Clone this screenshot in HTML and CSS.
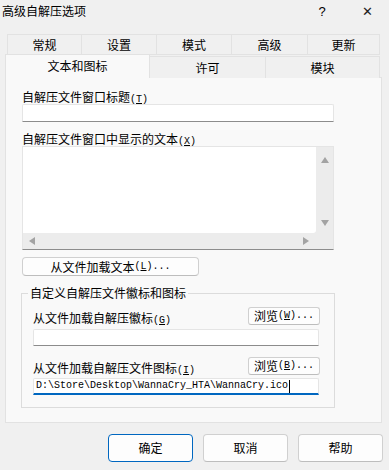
FILE: index.html
```html
<!DOCTYPE html>
<html lang="zh">
<head>
<meta charset="utf-8">
<link rel="stylesheet" href="styles.css">
</head>
<body>
<div class="window">
  <div class="titlebar">
    <span class="title">高级自解压选项</span>
    <span class="tb-btns"><span class="help">?</span><span class="close">✕</span></span>
  </div>
  <div class="tabs">
    <div class="tabrow row1">
      <div class="tab w74">常规</div>
      <div class="tab w75">设置</div>
      <div class="tab w75">模式</div>
      <div class="tab w76">高级</div>
      <div class="tab w72">更新</div>
    </div>
    <div class="tabrow row2">
      <div class="tab sel">文本和图标</div>
      <div class="tab w116">许可</div>
      <div class="tab w114">模块</div>
    </div>
  </div>
  <div class="panel">
    <div class="lbl">自解压文件窗口标题<span class="m">(<u>T</u>)</span></div>
    <div class="field f1"></div>
    <div class="lbl l2">自解压文件窗口中显示的文本<span class="m">(<u>X</u>)</span></div>
    <div class="textarea">
      <div class="ta-main">
        <div class="ta-white"></div>
        <div class="vscroll"><span class="arr up"></span><span class="arr down"></span></div>
      </div>
      <div class="hscroll"><span class="arr left"></span><span class="arr right"></span></div>
    </div>
    <div class="btn loadtxt">从文件加载文本<span class="m">(<u>L</u>)...</span></div>
    <fieldset class="group">
      <legend>自定义自解压文件徽标和图标</legend>
      <div class="grow g1">
        <span class="glbl">从文件加载自解压徽标<span class="m">(<u>G</u>)</span></span>
        <span class="btn small">浏览<span class="m">(<u>W</u>)...</span></span>
      </div>
      <div class="field f2"></div>
      <div class="grow g2">
        <span class="glbl">从文件加载自解压文件图标<span class="m">(<u>I</u>)</span></span>
        <span class="btn small">浏览<span class="m">(<u>B</u>)...</span></span>
      </div>
      <div class="field f3"><span class="val">D:\Store\Desktop\WannaCry_HTA\WannaCry.ico</span><span class="caret"></span></div>
    </fieldset>
  </div>
  <div class="footer">
    <div class="btn big ok">确定</div>
    <div class="btn big">取消</div>
    <div class="btn big">帮助</div>
  </div>
</div>
</body>
</html>
```

FILE: styles.css
```css
* { box-sizing: border-box; }
html, body { margin: 0; padding: 0; }
body {
  width: 389px;
  height: 470px;
  background: #f0f0f0;
  font-family: "Noto Sans CJK SC", "Noto Sans", sans-serif;
  font-size: 12px;
  color: #000;
  overflow: hidden;
}
.window { width: 389px; height: 470px; }
.titlebar {
  height: 22px;
  display: flex;
  justify-content: space-between;
  align-items: center;
  padding: 0 0 0 2px;
}
.title { font-size: 12px; line-height: 20px; }
.tb-btns { display: flex; align-items: center; }
.help { font-family: "Liberation Sans", sans-serif; font-size: 13px; width: 46px; text-align: center; margin-right: 0; }
.close { font-family: "DejaVu Sans", sans-serif; font-size: 13px; font-weight: 300; width: 44px; text-align: center; color: #222; }

.tabs { margin-top: 12px; position: relative; z-index: 1; }
.tabrow { display: flex; }
.row1 { margin-left: 7px; height: 21px; }
.row2 { margin-left: 5px; height: 24px; margin-top: -1px; align-items: flex-end; }
.tab {
  height: 21px;
  background: #f0f0f0;
  border: 1px solid #e2e2e2;
  margin-right: -1px;
  display: flex;
  align-items: center;
  justify-content: center;
  font-size: 12px;
  line-height: 14px;
}
.row2 .tab { height: 22px; border-bottom: none; }
.row2 .tab.sel {
  height: 24px;
  width: 145px;
  background: #f9f9f9;
  border-color: #e2e2e2;
  padding-bottom: 2px;
}
.w74 { width: 75px; }
.w75 { width: 76px; }
.w76 { width: 77px; }
.w72 { width: 73px; }
.w116 { width: 117px; }
.w114 { width: 115px; }

.panel {
  margin: -1px 0 0 5px;
  width: 377px;
  height: 346px;
  background: #f9f9f9;
  border: 1px solid #e2e2e2;
  padding: 12px 0 0 16px;
}
.lbl { line-height: 14px; height: 14px; font-size: 12px; }
.l2 { margin-top: 10px; }
.m { font-family: "Liberation Mono", monospace; font-size: 10px; }
u { text-decoration: underline; text-underline-offset: 1px; }

.field {
  background: #fff;
  border: 1px solid #e5e5e5;
  border-bottom: 1px solid #8c8c8c;
  border-radius: 2px 2px 0 0;
}
.f1 { width: 312px; height: 18px; }

.textarea {
  width: 312px;
  height: 104px;
  border: 1px solid #e5e5e5;
  border-bottom: 1px solid #8c8c8c;
  background: #ececec;
  display: flex;
  flex-direction: column;
}
.ta-main { display: flex; height: 86px; }
.ta-white { flex: 1; background: #fff; border-radius: 0 0 3px 0; }
.vscroll {
  width: 17px;
  display: flex;
  flex-direction: column;
  justify-content: space-between;
  align-items: center;
  padding: 10px 0 7px;
}
.hscroll {
  flex: 1;
  display: flex;
  justify-content: space-between;
  align-items: center;
  padding: 0 24px 0 6px;
}
.arr { width: 0; height: 0; border: 4px solid transparent; display: block; }
.up { border-bottom: 6px solid #a3a3a3; border-top: 0; }
.down { border-top: 6px solid #a3a3a3; border-bottom: 0; }
.left { border-right: 6px solid #a3a3a3; border-left: 0; }
.right { border-left: 6px solid #a3a3a3; border-right: 0; }

.btn {
  background: #fdfdfd;
  border: 1px solid #d0d0d0;
  border-bottom-color: #bdbdbd;
  border-radius: 4px;
  display: flex;
  align-items: center;
  justify-content: center;
  font-size: 12px;
  line-height: 14px;
}
.loadtxt { width: 177px; height: 19px; margin-top: 7px; }

.group {
  margin: 9px 0 0 -1px;
  width: 314px;
  height: 123px;
  border: 1px solid #dcdcdc;
  padding: 0 14px 0 11px;
  min-width: 0;
}
.group legend {
  font-size: 12px;
  line-height: 16px;
  padding: 0 2px;
  margin-left: -5px;
}
.grow { display: flex; justify-content: space-between; align-items: flex-end; height: 20px; }
.g1 { margin-top: 7px; }
.g2 { margin-top: 12px; }
.glbl { line-height: 14px; }
.btn.small { width: 72px; height: 18px; margin-bottom: 3px; border-radius: 3px; }
.f2 { width: 286px; height: 17px; margin-top: 1px; }
.f3 {
  width: 286px;
  height: 17px;
  margin-top: 0;
  border-bottom: 2px solid #0067c0;
  display: flex;
  align-items: center;
  padding-left: 2px;
}
.val { font-family: "Liberation Mono", monospace; font-size: 10px; line-height: 12px; white-space: nowrap; }
.caret { width: 1px; height: 13px; background: #000; margin-left: 1px; }

.footer {
  display: flex;
  justify-content: flex-end;
  gap: 10px;
  margin-top: 11px;
  padding-right: 6px;
}
.btn.big { width: 85px; height: 28px; }
.btn.ok { border: 1px solid #0067c0; }
```
